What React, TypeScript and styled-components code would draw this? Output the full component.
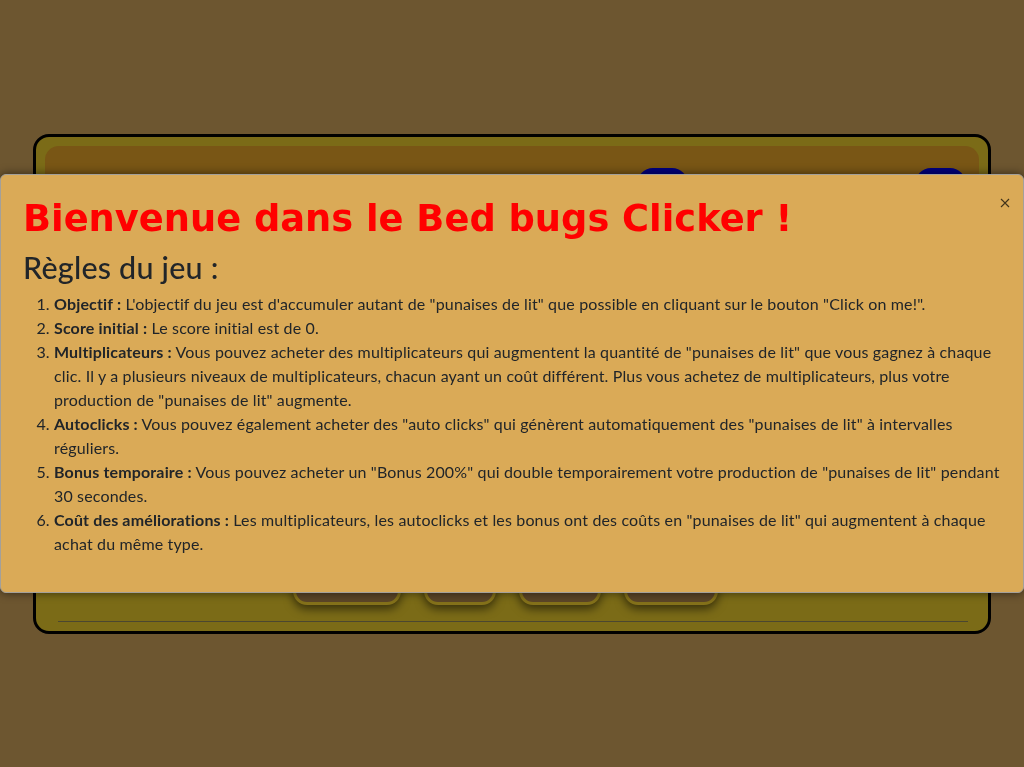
import { FC } from 'react';
import styled, { createGlobalStyle } from 'styled-components';

const GlobalStyle = createGlobalStyle`
    html, body {
        margin: 0;
        padding: 0;
        background-color: #6d5630;
    }

    body {
        font-family: Lato, 'Noto Sans', sans-serif;
        font-size: 16px;
        letter-spacing: 0.15px;
        line-height: 1.5;
        color: #212529;
    }

    * {
        box-sizing: border-box;
    }
`;

// ----------------------------------------------------------------------------

const GameCard = styled.main`
    width: 958px;
    margin: 134px auto 0;
    padding: 9px;

    background-color: #7b6b17;
    border: 3px solid #000;
    border-radius: 16px;
`;

const ScorePanel = styled.section`
    height: 380px;
    padding: 22px 13px 0 0;

    background-color: #795615;
    border-radius: 14px;

    display: flex;
    justify-content: flex-end;
    gap: 227px;
`;

const ShopButton = styled.button`
    width: 51px;
    height: 40px;

    border: 0;
    border-radius: 16px;
    background-color: #00007d;
`;

const ActionRow = styled.div`
    margin-top: 39px;
    padding-right: 14px;

    display: flex;
    justify-content: center;
    gap: 23px;
`;

const ActionButton = styled.button<{ $width: number }>`
    width: ${({ $width }) => $width}px;
    height: 40px;

    background-color: #5b4527;
    border: 3px solid #84711a;
    border-radius: 14px;
    box-shadow: 0 4px 10px rgba(0, 0, 0, 0.55);
`;

const Divider = styled.hr`
    margin: 16px 11px 0 13px;

    border: 0;
    border-top: 1px solid #4b4730;
`;

// ----------------------------------------------------------------------------

const Modal = styled.div`
    position: fixed;
    top: 174px;
    left: 0;
    right: 0;

    padding: 22px 16px 20px 22px;

    background-color: #daaa57;
    border: 1px solid #a3a09a;
    border-radius: 6px;
    box-shadow: 0 0 10px rgba(0, 0, 0, 0.55);
`;

const CloseButton = styled.button`
    position: absolute;
    top: 22px;
    right: 12px;

    width: 12px;
    height: 12px;
    padding: 0;

    border: 0;
    background: transparent;
    opacity: 0.7;
    cursor: pointer;
`;

const Title = styled.h1`
    margin: 0 0 10px;

    font-family: 'DejaVu Sans', Verdana, sans-serif;
    font-size: 36.8px;
    font-weight: 700;
    letter-spacing: 0;
    line-height: 1.2;
    color: #ff0000;
`;

const RulesHeader = styled.h3`
    margin: 0 0 7px;

    font-size: 30.5px;
    font-weight: 500;
    letter-spacing: 0.2px;
    line-height: 1.1;
`;

const RulesList = styled.ol`
    margin: 0 0 16px;
    padding-left: 31px;
`;

const Rule = styled.li`
    strong {
        font-weight: 700;
    }
`;

const rules: { label: string; text: string }[] = [
    {
        label: 'Objectif :',
        text: 'L\'objectif du jeu est d\'accumuler autant de "punaises de lit" que possible en cliquant sur le bouton "Click on me!".',
    },
    { label: 'Score initial :', text: 'Le score initial est de 0.' },
    {
        label: 'Multiplicateurs :',
        text: 'Vous pouvez acheter des multiplicateurs qui augmentent la quantité de "punaises de lit" que vous gagnez à chaque clic. Il y a plusieurs niveaux de multiplicateurs, chacun ayant un coût différent. Plus vous achetez de multiplicateurs, plus votre production de "punaises de lit" augmente.',
    },
    {
        label: 'Autoclicks :',
        text: 'Vous pouvez également acheter des "auto clicks" qui génèrent automatiquement des "punaises de lit" à intervalles réguliers.',
    },
    {
        label: 'Bonus temporaire :',
        text: 'Vous pouvez acheter un "Bonus 200%" qui double temporairement votre production de "punaises de lit" pendant 30 secondes.',
    },
    {
        label: 'Coût des améliorations :',
        text: 'Les multiplicateurs, les autoclicks et les bonus ont des coûts en "punaises de lit" qui augmentent à chaque achat du même type.',
    },
];

const actionWidths = [108, 72, 82, 94];

const App: FC = () => {
    return (
        <>
            <GlobalStyle />
            <GameCard>
                <ScorePanel>
                    <ShopButton aria-label="Multiplicateur" />
                    <ShopButton aria-label="Autoclick" />
                </ScorePanel>
                <ActionRow>
                    {actionWidths.map((width, i) => (
                        <ActionButton key={i} $width={width} aria-label={`action ${i + 1}`} />
                    ))}
                </ActionRow>
                <Divider />
            </GameCard>

            <Modal role="dialog">
                <CloseButton aria-label="Close">
                    <svg width="12" height="12" viewBox="0 0 12 12">
                        <path d="M2 2 L10 10 M10 2 L2 10" stroke="#000" strokeWidth="1.2" />
                    </svg>
                </CloseButton>
                <Title>Bienvenue dans le Bed bugs Clicker !</Title>
                <RulesHeader>Règles du jeu :</RulesHeader>
                <RulesList>
                    {rules.map((rule) => (
                        <Rule key={rule.label}>
                            <strong>{rule.label}</strong> {rule.text}
                        </Rule>
                    ))}
                </RulesList>
            </Modal>
        </>
    );
};

export default App;
